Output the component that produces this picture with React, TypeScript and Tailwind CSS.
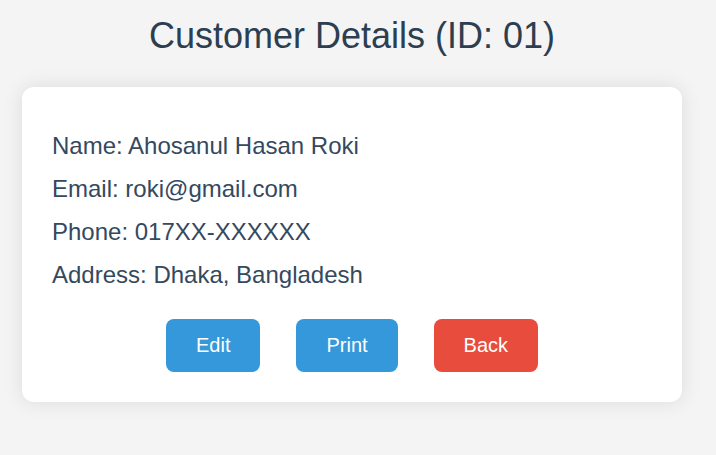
const details = [
  { label: "Name", value: "Ahosanul Hasan Roki" },
  { label: "Email", value: "roki@gmail.com" },
  { label: "Phone", value: "017XX-XXXXXX" },
  { label: "Address", value: "Dhaka, Bangladesh" },
];

const actions = [
  { label: "Edit", color: "bg-[#3498db]" },
  { label: "Print", color: "bg-[#3498db]" },
  { label: "Back", color: "bg-[#e74c3c]" },
];

export default function App() {
  return (
    <main className="min-h-screen bg-[#f4f4f4] pt-3 pr-[34px] pb-12 pl-[22px] font-['Liberation_Sans',Arial,sans-serif] text-[#2c3e50]">
      <h1 className="text-center text-[36px] leading-[48px]">Customer Details (ID: 01)</h1>
      <section className="mt-[27px] rounded-xl bg-white px-[30px] pt-[37px] pb-[30px] shadow-[0_0_20px_rgba(0,0,0,0.1)]">
        <div className="flex flex-col text-2xl leading-[43px] text-[#34495e]">
          {details.map((d) => (
            <p key={d.label}>
              {d.label}: {d.value}
            </p>
          ))}
        </div>
        <div className="mt-[23px] flex justify-center gap-9">
          {actions.map((a) => (
            <button
              key={a.label}
              type="button"
              className={`rounded-lg px-[30px] py-[15px] text-xl leading-[23px] text-white ${a.color}`}
            >
              {a.label}
            </button>
          ))}
        </div>
      </section>
    </main>
  );
}
